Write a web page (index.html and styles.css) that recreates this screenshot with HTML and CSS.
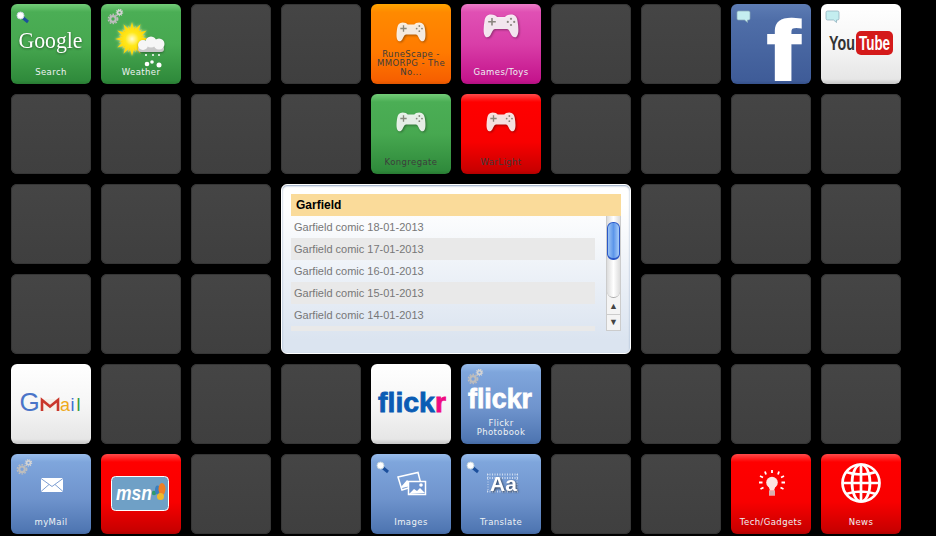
FILE: index.html
```html
<!DOCTYPE html>
<html lang="en">
<head>
    <meta charset="UTF-8">
    <meta name="viewport" content="width=device-width, initial-scale=1.0">
    <title>Start Page</title>
    <link rel="stylesheet" href="styles.css">
</head>
<body>
    <!-- shared icons -->
    <svg class="icon-defs" width="0" height="0">
        <defs>
            <symbol id="pad" viewBox="0 0 36 24">
                <path d="M8 .5C11 .5 13 1.500 14 3H22C23 1.500 25 .5 28 .5C32 .5 34 3 34.500 7C35.500 13 36 19 34 22C33 24 30 23.500 28.500 21C27 18.500 26 15 24 15H12C10 15 9 18.500 7.500 21C6 23.500 3 24 2 22C0 19 .5 13 1.500 7C2 3 4 .5 8 .5Z" fill="#fff" fill-opacity="0.88"/>
                <path d="M8.200 4h1.600v3h3v1.600h-3v3h-1.600v-3h-3v-1.600h3z" fill="#443" fill-opacity="0.6"/>
                <circle cx="28" cy="4.800" r="1.100" fill="#443" fill-opacity="0.6"/>
                <circle cx="28" cy="11" r="1.100" fill="#443" fill-opacity="0.6"/>
                <circle cx="24.800" cy="7.900" r="1.100" fill="#443" fill-opacity="0.6"/>
                <circle cx="31.200" cy="7.900" r="1.100" fill="#443" fill-opacity="0.6"/>
            </symbol>
            <symbol id="lens" viewBox="0 0 14 14">
                <path d="M6 6L12 11" stroke="#1c4f9c" stroke-width="3"/>
                <circle cx="4.500" cy="4.500" r="3.500" fill="#fff" stroke="#c4d4dc" stroke-width="1"/>
            </symbol>
            <symbol id="gears" viewBox="0 0 18 16">
                <circle cx="6" cy="10.500" r="2.800" fill="none" stroke="#bdbdbd" stroke-width="2.200"/>
                <circle cx="6" cy="10.500" r="4.700" fill="none" stroke="#bdbdbd" stroke-width="1.400" stroke-dasharray="1.700 1.300"/>
                <circle cx="12.500" cy="4" r="1.900" fill="none" stroke="#d4d4d4" stroke-width="1.600"/>
                <circle cx="12.500" cy="4" r="3.200" fill="none" stroke="#d4d4d4" stroke-width="1.100" stroke-dasharray="1.200 1"/>
            </symbol>
            <symbol id="bubble" viewBox="0 0 15 13">
                <path d="M2.500 1h10a1.500 1.500 0 0 1 1.500 1.500v6a1.500 1.500 0 0 1-1.500 1.500h-1v2.500l-3-2.500h-6a1.500 1.500 0 0 1-1.500-1.500v-6a1.500 1.500 0 0 1 1.500-1.500z" fill="#c4eef0" stroke="#8aa9b8" stroke-width="0.700"/>
            </symbol>
            <polygon id="sun-rays" points="31,18 33.300,26.300 39.500,20.300 37.400,28.600 45.700,26.500 39.700,32.700 48,35 39.700,37.300 45.700,43.500 37.400,41.400 39.500,49.700 33.300,43.700 31,52 28.700,43.700 22.500,49.700 24.600,41.400 16.300,43.500 22.300,37.300 14,35 22.300,32.700 16.300,26.500 24.600,28.600 22.500,20.300 28.700,26.300"/>
            <radialGradient id="sun-fill">
                <stop offset="0" stop-color="#fffbd0"/>
                <stop offset="0.4" stop-color="#ffe81a"/>
                <stop offset="1" stop-color="#ffd000"/>
            </radialGradient>
        </defs>
    </svg>

    <div class="board">
        <!-- row 1 -->
        <div class="tile green">
            <svg class="art" viewBox="0 0 80 80">
                <use href="#lens" x="5" y="7" width="14" height="14"/>
                <text class="logo-serif" x="7.500" y="44" font-size="24" textLength="64" lengthAdjust="spacingAndGlyphs">Google</text>
            </svg>
            <span class="label">Search</span>
        </div>
        <div class="tile green">
            <svg class="art" viewBox="0 0 80 80">
                <use href="#gears" x="6" y="4.500" width="18" height="16"/>
                <g class="sun" fill="url(#sun-fill)">
                    <use href="#sun-rays" transform="rotate(15 31 35) translate(5.600 6.300) scale(.82)"/>
                    <use href="#sun-rays"/>
                </g>
                <g class="cloud">
                    <rect x="37" y="42" width="26" height="6" rx="3" fill="#c8c8c8"/>
                    <g fill="#f6f6f6">
                        <circle cx="42" cy="41" r="5"/>
                        <circle cx="50" cy="38" r="5.500"/>
                        <circle cx="58" cy="40" r="5.500"/>
                    </g>
                </g>
                <g fill="#fff">
                    <circle cx="45" cy="51" r="1"/>
                    <circle cx="52" cy="51" r="1"/>
                    <circle cx="58" cy="51" r="1"/>
                    <circle cx="46" cy="60" r="2.300"/>
                    <circle cx="51" cy="58" r="1.800"/>
                    <circle cx="58" cy="61" r="2.500"/>
                </g>
            </svg>
            <span class="label">Weather</span>
        </div>
        <div class="tile"></div>
        <div class="tile"></div>
        <div class="tile orange">
            <svg class="art" viewBox="0 0 80 80"><use class="pad" href="#pad" x="25" y="18" width="30" height="20"/></svg>
            <span class="label dark">RuneScape - MMORPG - The No...</span>
        </div>
        <div class="tile pink">
            <svg class="art" viewBox="0 0 80 80"><use class="pad" href="#pad" x="22" y="10" width="36" height="24"/></svg>
            <span class="label">Games/Toys</span>
        </div>
        <div class="tile"></div>
        <div class="tile"></div>
        <div class="tile navy">
            <svg class="art" viewBox="0 0 80 80">
                <use href="#bubble" x="5" y="6" width="15" height="13"/>
                <text class="logo-f" x="36" y="76" font-size="84" textLength="33" lengthAdjust="spacingAndGlyphs">f</text>
            </svg>
        </div>
        <div class="tile white">
            <svg class="art" viewBox="0 0 80 80">
                <use href="#bubble" x="4" y="6" width="15" height="13"/>
                <text class="logo-you" transform="translate(8 46) scale(.68 1)" font-size="21">You</text>
                <rect x="35" y="27" width="37" height="24" rx="5" fill="#d41a1a"/>
                <text class="logo-tube" transform="translate(38 46) scale(.64 1)" font-size="21">Tube</text>
            </svg>
        </div>

        <!-- row 2 -->
        <div class="tile"></div>
        <div class="tile"></div>
        <div class="tile"></div>
        <div class="tile"></div>
        <div class="tile green">
            <svg class="art" viewBox="0 0 80 80"><use class="pad" href="#pad" x="25" y="18" width="30" height="20"/></svg>
            <span class="label dark">Kongregate</span>
        </div>
        <div class="tile red">
            <svg class="art" viewBox="0 0 80 80"><use class="pad" href="#pad" x="25" y="18" width="30" height="20"/></svg>
            <span class="label dark">WarLight</span>
        </div>
        <div class="tile"></div>
        <div class="tile"></div>
        <div class="tile"></div>
        <div class="tile"></div>

        <!-- row 3 and 4 -->
        <div class="tile"></div>
        <div class="tile"></div>
        <div class="tile"></div>
        <div class="widget">
            <h3 class="widget-title">Garfield</h3>
            <div class="widget-body">
                <ul class="feed">
                    <li>Garfield comic 18-01-2013</li>
                    <li>Garfield comic 17-01-2013</li>
                    <li>Garfield comic 16-01-2013</li>
                    <li>Garfield comic 15-01-2013</li>
                    <li>Garfield comic 14-01-2013</li>
                    <li></li>
                </ul>
                <div class="scrollbar">
                    <div class="scroll-track">
                        <div class="scroll-thumb"></div>
                    </div>
                    <div class="scroll-btn">&#9650;</div>
                    <div class="scroll-btn">&#9660;</div>
                </div>
            </div>
        </div>
        <div class="tile"></div>
        <div class="tile"></div>
        <div class="tile"></div>
        <div class="tile"></div>
        <div class="tile"></div>
        <div class="tile"></div>
        <div class="tile"></div>
        <div class="tile"></div>
        <div class="tile"></div>

        <!-- row 5 -->
        <div class="tile white">
            <svg class="art" viewBox="0 0 80 80">
                <text class="logo-gmail" x="8.500" y="47" font-size="26" fill="#4a74c8">G</text>
                <path d="M30 35h18v12h-18z" fill="#f4f0ea"/>
                <path d="M31 47V36l8 6.500 8-6.500v11" fill="none" stroke="#c9362b" stroke-width="2.600"/>
                <text class="logo-gmail" x="49" y="47" font-size="18" fill="#efaa1c">a</text>
                <text class="logo-gmail" x="59.500" y="47" font-size="18" fill="#3f6fd0">i</text>
                <text class="logo-gmail" x="65.500" y="47" font-size="18" fill="#2f9a3d">l</text>
            </svg>
        </div>
        <div class="tile"></div>
        <div class="tile"></div>
        <div class="tile"></div>
        <div class="tile white">
            <svg class="art" viewBox="0 0 80 80">
                <text class="logo-flickr" x="7" y="47.500" font-size="28" textLength="68" lengthAdjust="spacingAndGlyphs"><tspan fill="#0a5cb4" stroke="#0a5cb4">flick</tspan><tspan fill="#ef0a83" stroke="#ef0a83">r</tspan></text>
            </svg>
        </div>
        <div class="tile blue">
            <svg class="art" viewBox="0 0 80 80">
                <text class="logo-flickr" x="7" y="44" font-size="27" textLength="64" lengthAdjust="spacingAndGlyphs" fill="#fff" stroke="#fff">flickr</text>
                <use href="#gears" x="6" y="4.500" width="18" height="16"/>
            </svg>
            <span class="label">Flickr Photobook</span>
        </div>
        <div class="tile"></div>
        <div class="tile"></div>
        <div class="tile"></div>
        <div class="tile"></div>

        <!-- row 6 -->
        <div class="tile blue">
            <svg class="art" viewBox="0 0 80 80">
                <use href="#gears" x="5" y="4.800" width="18" height="16"/>
                <rect x="30" y="24" width="22" height="14" rx="1" fill="#fff"/>
                <path d="M30 24.500l11 8 11-8M30 37.500l8-7M52 37.500l-8-7" fill="none" stroke="#7e9fd3" stroke-width="1"/>
            </svg>
            <span class="label">myMail</span>
        </div>
        <div class="tile red">
            <svg class="art" viewBox="0 0 80 80">
                <rect x="10.500" y="22.500" width="57" height="34" rx="4" fill="#6fa0c6" stroke="#fff" stroke-width="1"/>
                <text class="logo-msn" x="15" y="46" font-size="20" textLength="36" lengthAdjust="spacingAndGlyphs">msn</text>
                <circle cx="53" cy="39" r="2.200" fill="#2f9a6b"/>
                <ellipse cx="56.500" cy="36" rx="2.500" ry="4.500" fill="#3a7fc0"/>
                <ellipse cx="61" cy="35" rx="3.500" ry="6" fill="#ef7f26"/>
                <ellipse cx="59.500" cy="42.500" rx="3.500" ry="3.500" fill="#efb92a"/>
            </svg>
        </div>
        <div class="tile"></div>
        <div class="tile"></div>
        <div class="tile blue">
            <svg class="art" viewBox="0 0 80 80">
                <use href="#lens" x="5" y="7" width="14" height="14"/>
                <path d="M27 23L47 18.500 50 30 31 36z" fill="none" stroke="#fff" stroke-width="1.500"/>
                <path d="M30 33l6-7 5 4 4-3 3 3-17 4z" fill="#fff"/>
                <rect x="37.500" y="27.500" width="17" height="13" fill="#6e94cf" stroke="#fff" stroke-width="1.500"/>
                <path d="M38 40l5-5 3 2 3-3 5 5z" fill="#fff"/>
                <circle cx="50" cy="31" r="1.800" fill="#fff"/>
            </svg>
            <span class="label">Images</span>
        </div>
        <div class="tile blue">
            <svg class="art" viewBox="0 0 80 80">
                <use href="#lens" x="5" y="7" width="14" height="14"/>
                <path d="M26 20.500h31M26 24h31M26 37.500h31" stroke="#e8eef8" stroke-width="2" stroke-dasharray="1 1.500" opacity="0.75"/>
                <path d="M27 20v18M56 20v18" stroke="#e8eef8" stroke-width="1.500" stroke-dasharray="1 1.500" opacity="0.5"/>
                <text class="logo-aa" x="29" y="37" font-size="21">Aa</text>
            </svg>
            <span class="label">Translate</span>
        </div>
        <div class="tile"></div>
        <div class="tile"></div>
        <div class="tile red">
            <svg class="art" viewBox="0 0 80 80">
                <circle cx="41" cy="28.500" r="5.800" fill="#fde3e0"/>
                <path d="M37 31l2 5.500h4l2-5.500z" fill="#fde3e0"/>
                <rect x="38" y="36.500" width="6" height="5" fill="#f2f2f2"/>
                <path d="M38 38h6M38 40h6" stroke="#a33" stroke-width="0.700"/>
                <path d="M41 16v3M34 17.500l1 3M48 17.500l-1 3M29 22l3 1.500M53 22l-3 1.500M28 28.500h3.500M54 28.500h-3.500M29.500 35l3-1.500M52.500 35l-3-1.500" stroke="#fff" stroke-width="1.800"/>
            </svg>
            <span class="label">Tech/Gadgets</span>
        </div>
        <div class="tile red">
            <svg class="art" viewBox="0 0 80 80">
                <g fill="none" stroke="#fff" stroke-width="2.700">
                    <circle cx="40" cy="29" r="18.500"/>
                    <ellipse cx="40" cy="29" rx="9" ry="18.500"/>
                    <path d="M40 10.500v37M21.500 29h37M25 18q15 5 30 0M25 40q15-5 30 0"/>
                </g>
            </svg>
            <span class="label">News</span>
        </div>
    </div>
</body>
</html>
```

FILE: styles.css
```css
html, body {
    margin: 0;
    background-color: #000;
    overflow: hidden;
}
.icon-defs {
    position: absolute;
}
.board {
    display: grid;
    grid-template-columns: repeat(10, 80px);
    grid-auto-rows: 80px;
    gap: 10px;
    padding: 4px 11px;
}
.tile {
    position: relative;
    display: flex;
    flex-direction: column;
    justify-content: flex-end;
    align-items: center;
    box-sizing: border-box;
    padding: 0 4px 7px;
    border-radius: 6px;
    background: linear-gradient(#454545, #3f3f3f);
    box-shadow: inset 0 0 0 1px #363636;
}
.green {
    background: linear-gradient(#72cc78, #4bae55 10%, #47a850 50%, #2f8a3b 96%, #287a33);
    box-shadow: none;
}
.orange {
    background: linear-gradient(#ffa500, #ff8a00 10%, #ff7a00 60%, #f65f00 96%, #e05500);
    box-shadow: none;
}
.pink {
    background: linear-gradient(#ec7cc8, #e050b4 10%, #d93ea8 50%, #c4148c 96%, #b01080);
    box-shadow: none;
}
.red {
    background: linear-gradient(#ff4a4a, #ff0000 10%, #f80000 60%, #c80000 96%, #b00000);
    box-shadow: none;
}
.blue {
    background: linear-gradient(#98bceb, #7fa6dc 10%, #6f94cd 55%, #4f76b2 96%, #456aa4);
    box-shadow: none;
}
.navy {
    background: linear-gradient(#5d7cb4, #4f6ea8 20%, #3f5c98 96%, #35508a);
    box-shadow: none;
}
.white {
    background: linear-gradient(#fff, #f6f6f6 50%, #e6e6e6 94%, #c4c4c4);
    box-shadow: none;
}
.art {
    position: absolute;
    top: 0;
    left: 0;
    width: 80px;
    height: 80px;
    overflow: visible;
}
.pad {
    filter: drop-shadow(1px 1px 1px rgba(0, 0, 0, 0.4));
}
.sun {
    filter: drop-shadow(0 0 1.5px rgba(255, 255, 200, 0.8));
}
.cloud {
    filter: drop-shadow(0 1px 1px rgba(0, 0, 0, 0.35));
}
.label {
    position: relative;
    font-family: "DejaVu Sans", sans-serif;
    font-size: 8.5px;
    line-height: 9px;
    letter-spacing: 0.4px;
    text-align: center;
    color: #eef2f4;
}
.label.dark {
    color: #3c3c3c;
}
.logo-serif {
    font-family: "Liberation Serif", serif;
    fill: #fff;
    filter: drop-shadow(0 1px 1px rgba(0, 0, 0, 0.4));
}
.logo-f {
    font-family: "Liberation Sans", sans-serif;
    font-weight: bold;
    fill: #fff;
    stroke: #fff;
    stroke-width: 2.5px;
}
.logo-you {
    font-family: "Liberation Sans", sans-serif;
    font-weight: bold;
    fill: #333;
}
.logo-tube {
    font-family: "Liberation Sans", sans-serif;
    font-weight: bold;
    fill: #fff;
}
.logo-gmail {
    font-family: "Liberation Sans", sans-serif;
}
.logo-flickr {
    font-family: "Liberation Sans", sans-serif;
    font-weight: bold;
    stroke-width: 0.8px;
}
.logo-msn {
    font-family: "Liberation Sans", sans-serif;
    font-weight: bold;
    font-style: italic;
    fill: #fff;
}
.logo-aa {
    font-family: "Liberation Sans", sans-serif;
    font-weight: bold;
    fill: #fff;
    filter: drop-shadow(1px 1px 1px rgba(0, 0, 0, 0.6));
}
.widget {
    grid-column: span 4;
    grid-row: span 2;
    box-sizing: border-box;
    padding: 9px;
    border: 1px solid #fff;
    border-radius: 6px;
    background: linear-gradient(#fff, #fff 12%, #dbe4f0 92%);
    box-shadow: inset 0 1px 2px #8fa3c0;
    font-family: "Liberation Sans", Arial, sans-serif;
}
.widget-title {
    margin: 0;
    padding: 0 5px;
    font-size: 12px;
    line-height: 22px;
    color: #000;
    background-color: #fadb9a;
}
.widget-body {
    display: flex;
    justify-content: space-between;
    height: 115px;
}
.feed {
    width: 304px;
    margin: 0;
    padding: 0;
    list-style: none;
    overflow: hidden;
}
.feed li {
    height: 22px;
    padding: 0 3px;
    font-size: 11px;
    line-height: 22px;
    color: #777;
}
.feed li:nth-child(even) {
    background-color: #e9e9e9;
}
.scrollbar {
    display: flex;
    flex-direction: column;
    box-sizing: border-box;
    width: 15px;
    border: 1px solid #ccc;
    border-top: 0;
    background-color: #f4f4f4;
}
.scroll-track {
    box-sizing: border-box;
    height: 82px;
    padding-top: 6px;
    border-bottom: 1px solid #aaa;
    border-radius: 0 0 7px 7px;
    background: linear-gradient(90deg, #dcdcdc, #fff 50%, #dcdcdc);
}
.scroll-thumb {
    height: 38px;
    box-sizing: border-box;
    border: 1px solid #2a58c8;
    border-bottom-width: 2px;
    border-radius: 6px;
    background: linear-gradient(90deg, #9cc4f4, #5c96ea 50%, #a8ccf8);
}
.scroll-btn {
    flex: 1;
    display: flex;
    align-items: center;
    justify-content: center;
    font-size: 9px;
    color: #444;
}
.scroll-btn + .scroll-btn {
    border-top: 1px solid #ccc;
}
```
